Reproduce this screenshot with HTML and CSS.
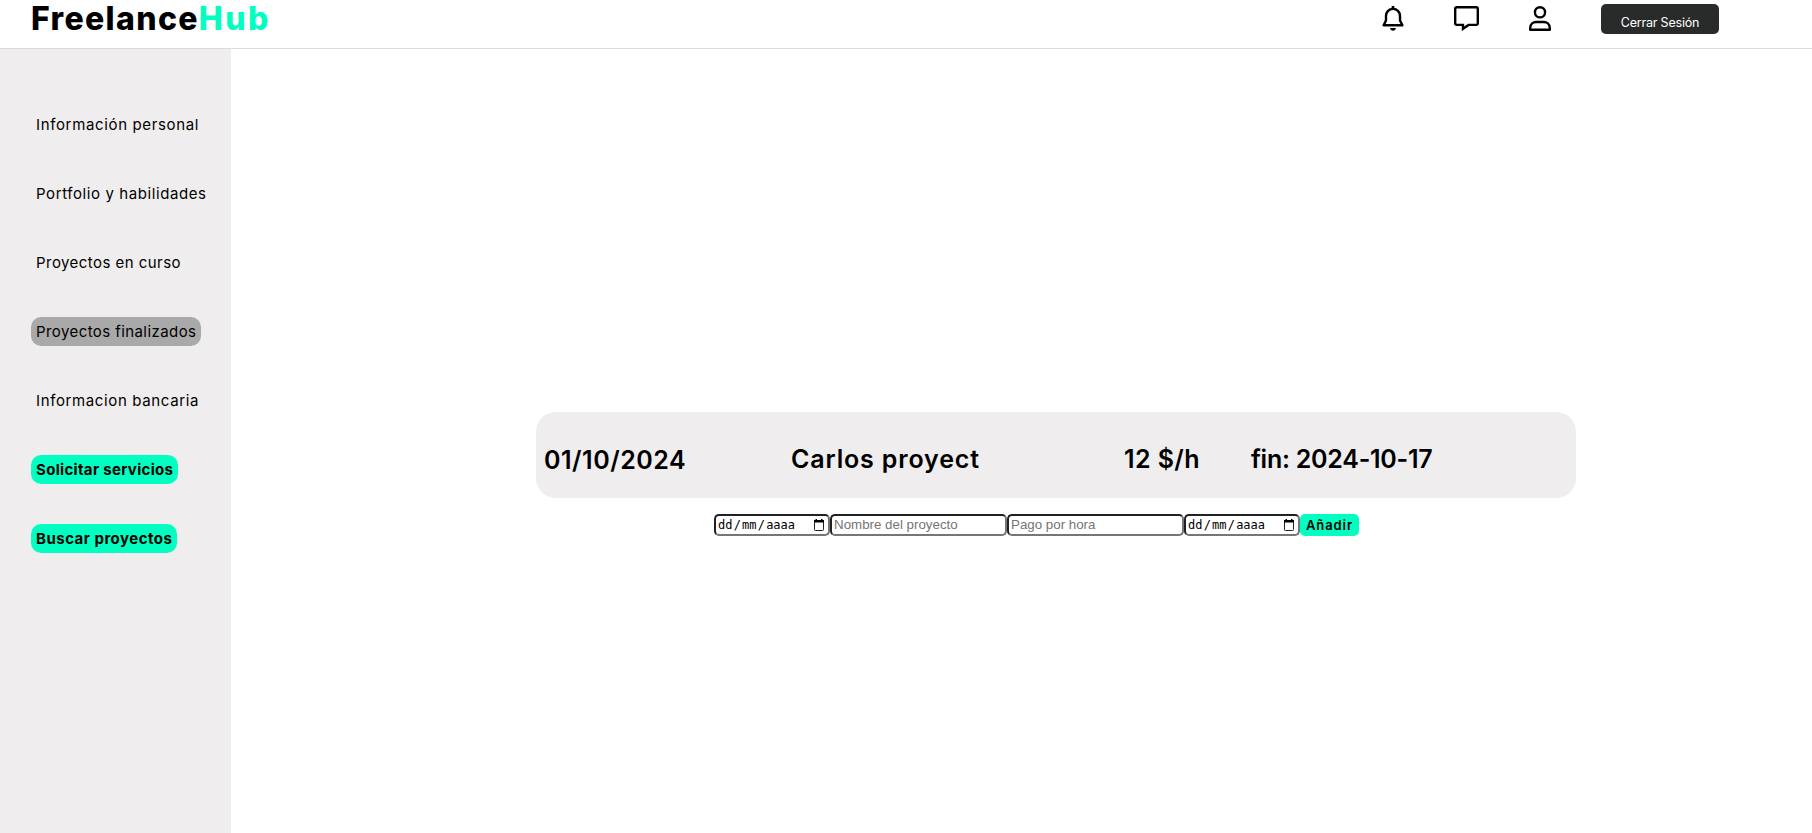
FILE: index.html
```
<!DOCTYPE html>
<html lang="es">
<head>
<meta charset="utf-8">
<title>FreelanceHub</title>
<link rel="stylesheet" href="styles.css">
</head>
<body>
<header class="header">
  <div class="logo">Freelance<span class="logo-accent">Hub</span></div>
  <div class="actions">
    <svg class="icon" width="22" height="25" viewBox="0 0 22 25" fill="none" stroke="#000" stroke-width="2.400">
      <path d="M11 0v3" stroke-width="2.6"/>
      <path d="M1.600 19.200h18.800L18 14.500V10C18 6 15 2.700 11 2.700S4 6 4 10v4.500z" stroke-linejoin="round"/>
      <path d="M8 22h6c-.4 1.800-1.500 2.800-3 2.800S8.400 23.800 8 22z" fill="#000" stroke="none"/>
    </svg>
    <svg class="icon" width="25" height="25" viewBox="0 0 25 25" fill="none" stroke="#000" stroke-width="2.400">
      <path d="M2.700 1.200h19.600a1.500 1.500 0 0 1 1.500 1.500v14.700a1.500 1.500 0 0 1-1.500 1.500H14.500L9 22.800v-3.900H2.700a1.500 1.500 0 0 1-1.500-1.500V2.700a1.500 1.500 0 0 1 1.500-1.500z"/>
    </svg>
    <svg class="icon" width="22" height="25" viewBox="0 0 22 25" fill="none" stroke="#000" stroke-width="2.400">
      <circle cx="11" cy="6.300" r="5.100"/>
      <path d="M1.200 23.800V22c0-3.500 2.700-6 6-6h7.600c3.300 0 6 2.500 6 6v1.800z" stroke-linejoin="round"/>
    </svg>
    <button class="logout">Cerrar Sesión</button>
  </div>
</header>
<div class="layout">
  <nav class="sidebar">
    <a class="link info">Información personal</a>
    <a class="link portfolio">Portfolio y habilidades</a>
    <a class="link current">Proyectos en curso</a>
    <a class="link finished">Proyectos finalizados</a>
    <a class="link bank">Informacion bancaria</a>
    <a class="link cta request">Solicitar servicios</a>
    <a class="link cta search">Buscar proyectos</a>
  </nav>
  <main class="content">
    <section class="project">
      <span class="date">01/10/2024</span>
      <span class="name">Carlos proyect</span>
      <span class="rate">12 $/h</span>
      <span class="end">fin: 2024-10-17</span>
    </section>
    <form class="form">
      <div class="field date-field"><span>dd</span><span>/</span><span>mm</span><span>/</span><span>aaaa</span>
        <svg class="calendar" width="10" height="12" viewBox="0 0 10 12"><path d="M.5 2.500h9v8.200q0 .8-.8.800H1.300q-.8 0-.8-.800z" fill="none" stroke="#222"/><path d="M0 1h10v2.500H0zM1.500 0h1.500v2H1.500zM7 0h1.500v2H7z" fill="#000"/></svg>
      </div>
      <input class="field text-field" type="text" placeholder="Nombre del proyecto">
      <input class="field text-field" type="text" placeholder="Pago por hora">
      <div class="field date-field"><span>dd</span><span>/</span><span>mm</span><span>/</span><span>aaaa</span>
        <svg class="calendar" width="10" height="12" viewBox="0 0 10 12"><path d="M.5 2.500h9v8.200q0 .8-.8.800H1.300q-.8 0-.8-.800z" fill="none" stroke="#222"/><path d="M0 1h10v2.500H0zM1.500 0h1.500v2H1.500zM7 0h1.500v2H7z" fill="#000"/></svg>
      </div>
      <button class="add" type="button">Añadir</button>
    </form>
  </main>
</div>
</body>
</html>
```

FILE: styles.css
```
* { box-sizing: border-box; }

body {
  margin: 0;
  height: 100vh;
  display: flex;
  flex-direction: column;
  overflow: hidden;
  background: #fff;
  color: #000;
  font-family: Inter, "Open Sans", sans-serif;
}

.header {
  display: flex;
  justify-content: space-between;
  align-items: flex-start;
  height: 49px;
  padding: 0 93px 0 31px;
  border-bottom: 1px solid #dcdcdc;
}

.logo {
  font-size: 32px;
  font-weight: 800;
  line-height: 38px;
  letter-spacing: 1.35px;
}

.logo-accent { color: #00ffc0; letter-spacing: 2.4px; }

.actions { display: flex; gap: 50px; padding-top: 4px; }

.icon { margin-top: 2px; }

.logout {
  width: 118px;
  height: 30px;
  padding: 6px 0 0;
  border: 0;
  border-radius: 5px;
  background: #292b2a;
  color: #fff;
  font: 400 12.5px Inter, sans-serif;
  letter-spacing: -0.2px;
}

.layout { display: flex; flex: 1; }

.sidebar {
  display: flex;
  flex-direction: column;
  align-items: flex-start;
  gap: 40px;
  width: 231px;
  padding: 61px 0 0 31px;
  background: #efeded;
}

.link {
  height: 29px;
  padding: 0 5px;
  border-radius: 10px;
  font-size: 15px;
  line-height: 30px;
  white-space: nowrap;
}

.info { letter-spacing: 0.65px; }
.portfolio { letter-spacing: 0.59px; }
.current { letter-spacing: 0.45px; }
.finished { width: 170px; background: #a9a9a9; letter-spacing: 0.42px; }
.bank { letter-spacing: 0.63px; }
.cta { background: #00ffc0; font-weight: 700; }
.request { width: 147px; letter-spacing: 0.32px; }
.search { width: 146px; letter-spacing: 0.49px; }

.content {
  display: flex;
  flex: 1;
  flex-direction: column;
  gap: 16px;
  padding: 363px 236px 0 305px;
}

.project {
  display: grid;
  grid-template-columns: 247px 333px 127px 1fr;
  height: 86px;
  padding: 32px 0 0 8px;
  border-radius: 20px;
  background: #efeded;
  font-size: 25px;
  font-weight: 600;
  line-height: 30px;
  white-space: nowrap;
}

.date { padding-top: 1px; letter-spacing: 0.52px; }
.name { letter-spacing: 0.85px; }
.rate { letter-spacing: 0.4px; }
.end { letter-spacing: -0.25px; }

.form { display: flex; padding-left: 178px; }

.field {
  height: 22px;
  border: 2px solid;
  border-color: #202124 #767676 #767676 #202124;
  border-radius: 5px;
  background: #fff;
}

.date-field {
  display: flex;
  align-items: center;
  gap: 1.2px;
  width: 116px;
  padding: 0 4px 0 2px;
  font: 12px "DejaVu Sans Mono", monospace;
}

.calendar { margin-left: auto; }

.text-field {
  width: 177px;
  padding: 0 2px 1px;
  font: 13.33px "Liberation Sans", Arial, sans-serif;
}

.text-field::placeholder { color: #757575; }

.add {
  width: 59px;
  height: 22px;
  padding: 0;
  border: 0;
  border-radius: 5px;
  background: #00ffc0;
  color: #000;
  font: 600 13px Inter, sans-serif;
  letter-spacing: 0.9px;
}
```
